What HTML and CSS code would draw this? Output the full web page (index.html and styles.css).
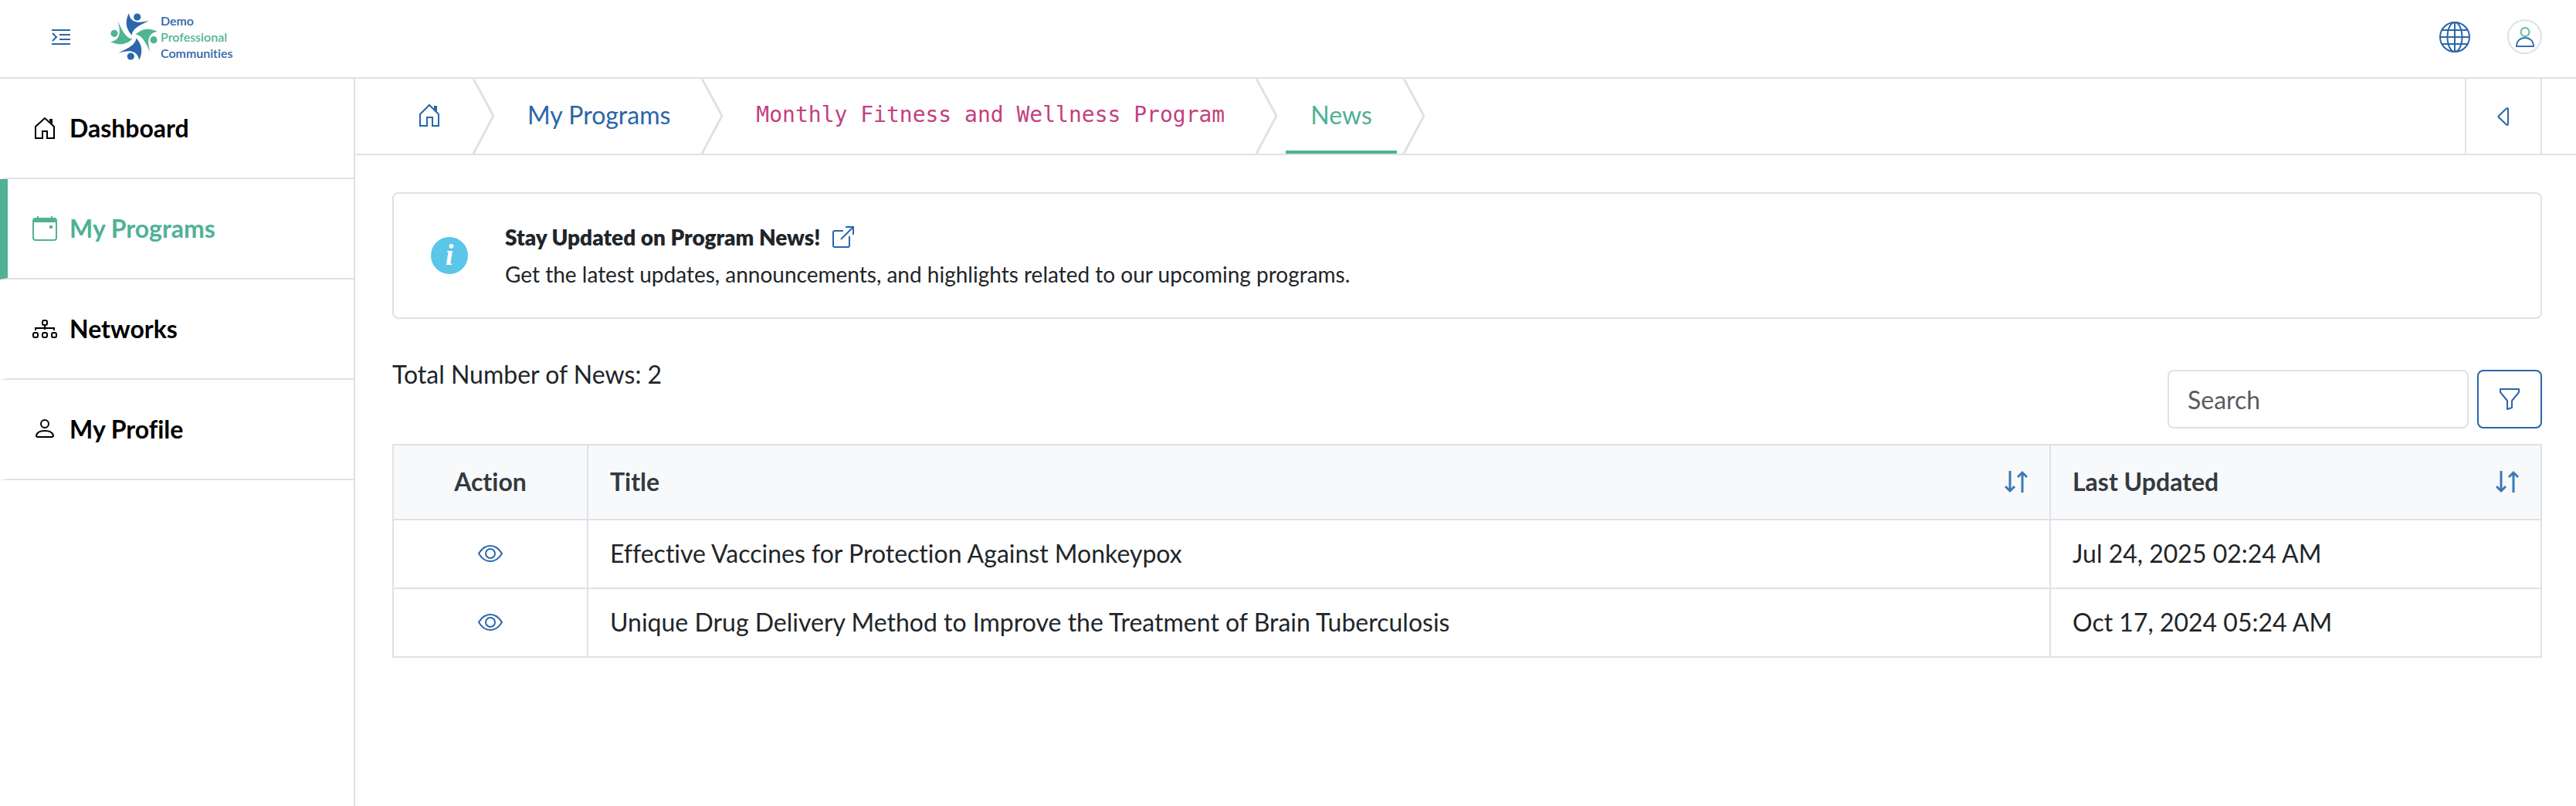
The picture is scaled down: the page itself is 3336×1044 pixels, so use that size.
FILE: index.html
```html
<!DOCTYPE html>
<html lang="en">
<head>
  <meta charset="UTF-8">
  <meta name="viewport" content="width=device-width, initial-scale=1.0">
  <title>News</title>
  <link rel="stylesheet" href="styles.css">
</head>
<body>
  <!-- Header -->
  <header class="header">
    <button type="button" class="icon-btn menu-toggle" aria-label="Toggle menu">
      <svg width="24" height="20" viewBox="0 0 24 20" fill="none" stroke="currentColor" stroke-width="2">
        <path d="M0 1h24M10 7h14M10 13h14M0 19h24M1 5l5 5-5 5"/>
      </svg>
    </button>
    <a href="#" class="logo">
      <svg width="61" height="61" viewBox="0 0 61 61" aria-hidden="true">
        <defs>
          <g id="person">
            <circle cx="34.7" cy="5" r="4.6"/>
            <path d="M24 0C20 8 18 18 27.5 28.5C29 20 36 16.500 50.700 9.500C43 11.500 36 13 31 10.500C26.500 8.500 24.500 5 24 0z"/>
          </g>
        </defs>
        <use href="#person" fill="#2a67ad"/>
        <use href="#person" fill="#50b493" transform="rotate(90 30.5 30.5)"/>
        <use href="#person" fill="#2a67ad" transform="rotate(180 30.5 30.5)"/>
        <use href="#person" fill="#50b493" transform="rotate(270 30.5 30.5)"/>
      </svg>
      <span class="logo-text">
        <span>Demo</span>
        <span class="green">Professional</span>
        <span>Communities</span>
      </span>
    </a>
    <div class="header-actions">
      <button type="button" class="icon-btn" aria-label="Language">
        <svg width="40" height="40" viewBox="0 0 40 40" fill="none" stroke="currentColor" stroke-width="2">
          <circle cx="20" cy="20" r="19"/>
          <ellipse cx="20" cy="20" rx="9.500" ry="19"/>
          <path d="M20 1v38M1 20h38M4 11h32M4 29h32"/>
        </svg>
      </button>
      <button type="button" class="icon-btn avatar" aria-label="Account">
        <svg width="24" height="26" viewBox="0 0 24 26" fill="none" stroke-width="2">
          <circle cx="12" cy="6.500" r="5.500" stroke="#5fba9d"/>
          <path d="M1 25c0-7 5-11 11-11s11 4 11 11z" stroke="#3a6db0"/>
        </svg>
      </button>
    </div>
  </header>

  <div class="layout">
    <!-- Sidebar -->
    <nav class="sidebar">
      <a href="#" class="nav-item">
        <svg width="32" height="32" viewBox="0 0 32 32" fill="none" stroke="currentColor" stroke-width="2">
          <path d="M4 29V14L16 3l12 11v15h-9v-9h-6v9z"/>
          <path d="M22 4h4v7l-4-4z" fill="currentColor" stroke="none"/>
        </svg>
        Dashboard
      </a>
      <a href="#" class="nav-item active">
        <svg width="32" height="32" viewBox="0 0 32 32" fill="none" stroke="currentColor" stroke-width="2">
          <rect x="1" y="3" width="30" height="28" rx="3"/>
          <path d="M7 0v4M25 0v4"/>
          <path d="M1 8V5q0-3 3-3h24q3 0 3 3v3z" fill="currentColor" stroke="none"/>
          <rect x="22" y="12" width="4" height="4" rx="1" fill="currentColor" stroke="none"/>
        </svg>
        My Programs
      </a>
      <a href="#" class="nav-item">
        <svg width="32" height="32" viewBox="0 0 32 32" fill="none" stroke="currentColor" stroke-width="2">
          <rect x="13" y="5" width="6" height="6" rx="2"/>
          <rect x="1" y="21" width="6" height="6" rx="2"/>
          <rect x="13" y="21" width="6" height="6" rx="2"/>
          <rect x="25" y="21" width="6" height="6" rx="2"/>
          <path d="M16 11v6M4 18v-3h24v3"/>
        </svg>
        Networks
      </a>
      <a href="#" class="nav-item">
        <svg width="32" height="32" viewBox="0 0 32 32" fill="none" stroke="currentColor" stroke-width="2">
          <circle cx="16" cy="9" r="5"/>
          <path d="M7 26h18q2 0 2-2c-1-4-5-6-11-6s-10 2-11 6q0 2 2 2z"/>
        </svg>
        My Profile
      </a>
    </nav>

    <div class="content">
      <!-- Breadcrumb -->
      <div class="topbar">
        <ol class="breadcrumb">
          <li>
            <a href="#" aria-label="Home">
              <svg width="32" height="32" viewBox="0 0 32 32" fill="none" stroke="currentColor" stroke-width="2">
                <path d="M4 30V15L16 3l12 12v15h-8V19h-7v11z"/>
                <path d="M22 4h4v8l-4-4z" fill="currentColor" stroke="none"/>
              </svg>
            </a>
            <svg class="chevron" width="28" height="97" viewBox="0 0 28 97"><path d="M1 0l26 48-26 49"/></svg>
          </li>
          <li>
            <a href="#">My Programs</a>
            <svg class="chevron" width="28" height="97" viewBox="0 0 28 97"><path d="M1 0l26 48-26 49"/></svg>
          </li>
          <li>
            <a href="#"><code>Monthly Fitness and Wellness Program</code></a>
            <svg class="chevron" width="28" height="97" viewBox="0 0 28 97"><path d="M1 0l26 48-26 49"/></svg>
          </li>
          <li>
            <a href="#" class="current" aria-current="page">News</a>
            <svg class="chevron" width="28" height="97" viewBox="0 0 28 97"><path d="M1 0l26 48-26 49"/></svg>
          </li>
        </ol>
        <button type="button" class="icon-btn back" aria-label="Back">
          <svg width="16" height="24" viewBox="0 0 16 24" fill="none" stroke="currentColor" stroke-width="2" stroke-linejoin="round">
            <path d="M2 11L12 1.500q2-1 2 1v19q0 2-2 1L2 13q-1-1 0-2z"/>
          </svg>
        </button>
      </div>

      <main class="main">
        <section class="info-box">
          <span class="info-icon">i</span>
          <div class="info-text">
            <h1>
              Stay Updated on Program News!
              <a href="#" aria-label="Open in new window">
                <svg width="28" height="28" viewBox="0 0 28 28" fill="none" stroke="currentColor" stroke-width="2">
                  <path d="M14 6H3Q1 6 1 8v17q0 2 2 2h17q2 0 2-2V13M11 17L27 1M17 1h10v10"/>
                </svg>
              </a>
            </h1>
            <p>Get the latest updates, announcements, and highlights related to our upcoming programs.</p>
          </div>
        </section>

        <div class="toolbar">
          <p>Total Number of News: 2</p>
          <form class="search-form">
            <input type="text" name="search" placeholder="Search" aria-label="Search">
            <button type="button" class="filter-btn" aria-label="Filter">
              <svg width="28" height="28" viewBox="0 0 28 28" fill="none" stroke="currentColor" stroke-width="2" stroke-linejoin="round">
                <path d="M2 1h24v4l-9 11v9l-6 2V16L2 5z"/>
              </svg>
            </button>
          </form>
        </div>

        <!-- News list -->
        <table class="news-table">
          <thead>
            <tr>
              <th class="col-action">Action</th>
              <th>
                <div class="sortable">
                  Title
                  <button type="button" class="icon-btn" aria-label="Sort by title">
                    <svg width="30" height="30" viewBox="0 0 30 30" fill="none" stroke="currentColor" stroke-width="3">
                      <path d="M7 1v26M1 21l6 6 6-6M23 29V3M17 9l6-6 6 6"/>
                    </svg>
                  </button>
                </div>
              </th>
              <th class="col-date">
                <div class="sortable">
                  Last Updated
                  <button type="button" class="icon-btn" aria-label="Sort by last updated">
                    <svg width="30" height="30" viewBox="0 0 30 30" fill="none" stroke="currentColor" stroke-width="3">
                      <path d="M7 1v26M1 21l6 6 6-6M23 29V3M17 9l6-6 6 6"/>
                    </svg>
                  </button>
                </div>
              </th>
            </tr>
          </thead>
          <tbody>
            <tr>
              <td class="col-action">
                <a href="#" aria-label="View">
                  <svg width="32" height="24" viewBox="0 0 32 24" fill="none" stroke="currentColor" stroke-width="2">
                    <path d="M1 12Q7 2 16 2t15 10Q25 22 16 22T1 12z"/>
                    <circle cx="16" cy="12" r="6"/>
                  </svg>
                </a>
              </td>
              <td>Effective Vaccines for Protection Against Monkeypox</td>
              <td>Jul 24, 2025 02:24 AM</td>
            </tr>
            <tr>
              <td class="col-action">
                <a href="#" aria-label="View">
                  <svg width="32" height="24" viewBox="0 0 32 24" fill="none" stroke="currentColor" stroke-width="2">
                    <path d="M1 12Q7 2 16 2t15 10Q25 22 16 22T1 12z"/>
                    <circle cx="16" cy="12" r="6"/>
                  </svg>
                </a>
              </td>
              <td>Unique Drug Delivery Method to Improve the Treatment of Brain Tuberculosis</td>
              <td>Oct 17, 2024 05:24 AM</td>
            </tr>
          </tbody>
        </table>
      </main>
    </div>
  </div>
</body>
</html>
```
FILE: styles.css
```css
* {
  box-sizing: border-box;
}

body {
  font-family: Lato, "Open Sans", sans-serif;
  font-size: 32px;
  line-height: 48px;
  font-variant-ligatures: none;
  color: #212529;
  background-color: #ffffff;
  margin: 0;
  min-height: 100vh;
  display: flex;
  flex-direction: column;
}

h1,
p {
  margin: 0;
}

a {
  color: #2a66a8;
  text-decoration: none;
}

svg {
  display: block;
  flex: none;
}

.icon-btn {
  display: flex;
  align-items: center;
  justify-content: center;
  padding: 0;
  border: none;
  background: none;
  color: #2a66a8;
  cursor: pointer;
}

/* Header */
.header {
  display: flex;
  align-items: center;
  padding: 16px 44px 21px 67px;
  border-bottom: 2px solid #dee2e6;
}

.menu-toggle {
  margin-right: 52px;
}

.logo {
  display: flex;
  align-items: center;
  gap: 4px;
}

.logo-text {
  display: flex;
  flex-direction: column;
  font-size: 16px;
  line-height: 21px;
  font-weight: 600;
}

.logo-text .green {
  color: #50b493;
}

.header-actions {
  display: flex;
  align-items: center;
  gap: 48px;
  margin-left: auto;
}

.avatar {
  width: 45px;
  height: 45px;
  border: 2px solid #dee2e6;
  border-radius: 50%;
}

.layout {
  display: flex;
  flex: 1;
}

/* Sidebar */
.sidebar {
  flex: none;
  width: 460px;
  border-right: 2px solid #dee2e6;
}

.nav-item {
  display: flex;
  align-items: center;
  gap: 16px;
  padding: 40px 32px;
  border-left: 10px solid transparent;
  border-bottom: 2px solid #dee2e6;
  color: #000000;
  font-weight: 700;
}

.nav-item.active {
  border-left-color: #50b195;
  color: #50b195;
}

.content {
  flex: 1;
  min-width: 0;
}

/* Breadcrumb */
.topbar {
  display: flex;
  justify-content: space-between;
  padding-right: 44px;
  border-bottom: 2px solid #dee2e6;
}

.breadcrumb {
  display: flex;
  list-style: none;
  margin: 0;
  padding: 0 0 0 48px;
}

.breadcrumb li {
  display: flex;
}

.breadcrumb a {
  display: flex;
  align-items: center;
  padding: 0 32px;
  border-bottom: 4px solid transparent;
}

.breadcrumb .current {
  color: #50b195;
  border-bottom-color: #50b195;
}

.breadcrumb code {
  font-family: "DejaVu Sans Mono", monospace;
  font-size: 28px;
  color: #c2417f;
}

.chevron {
  margin: 0 11px 0 8px;
  fill: none;
  stroke: #dee2e6;
  stroke-width: 3;
}

.back {
  width: 100px;
  border-left: 2px solid #dee2e6;
  border-right: 2px solid #dee2e6;
}

.main {
  padding: 48px 44px 48px 48px;
}

/* Info box */
.info-box {
  display: flex;
  align-items: center;
  gap: 48px;
  padding: 32px 48px;
  border: 2px solid #dee2e6;
  border-radius: 8px;
  font-size: 28px;
}

.info-icon {
  flex: none;
  width: 48px;
  height: 48px;
  border-radius: 50%;
  background-color: #5bc5ea;
  color: #ffffff;
  font: italic bold 38px/46px "Liberation Serif", serif;
  text-align: center;
}

.info-text h1 {
  display: flex;
  align-items: center;
  gap: 16px;
  font-size: 28px;
  font-weight: 800;
}

/* Toolbar */
.toolbar {
  display: flex;
  justify-content: space-between;
  margin-top: 48px;
}

.search-form {
  display: flex;
  gap: 11px;
  margin: 18px 0 20px;
}

.search-form input {
  width: 390px;
  height: 76px;
  padding: 0 24px;
  border: 2px solid #dee2e6;
  border-radius: 8px;
  font: inherit;
}

.search-form input::placeholder {
  color: #595c5f;
  opacity: 1;
}

.filter-btn {
  display: flex;
  align-items: center;
  justify-content: center;
  width: 84px;
  padding: 0;
  border: 2px solid #2a66a8;
  border-radius: 8px;
  background-color: #ffffff;
  color: #2a66a8;
  cursor: pointer;
}

/* Table */
.news-table {
  width: 100%;
  border-collapse: collapse;
}

.news-table th,
.news-table td {
  padding: 19px 28px 20px;
  border: 2px solid #dee2e6;
  text-align: left;
}

.news-table th {
  padding: 23px 28px 24px;
  background-color: #f8f9fb;
  color: #343a40;
  font-weight: 700;
}

.news-table .col-action {
  width: 252px;
  text-align: center;
}

.news-table .col-action a {
  display: flex;
  justify-content: center;
}

.col-date {
  width: 636px;
}

.sortable {
  display: flex;
  align-items: center;
  justify-content: space-between;
}

.sortable .icon-btn {
  color: #3e78b8;
}
```
